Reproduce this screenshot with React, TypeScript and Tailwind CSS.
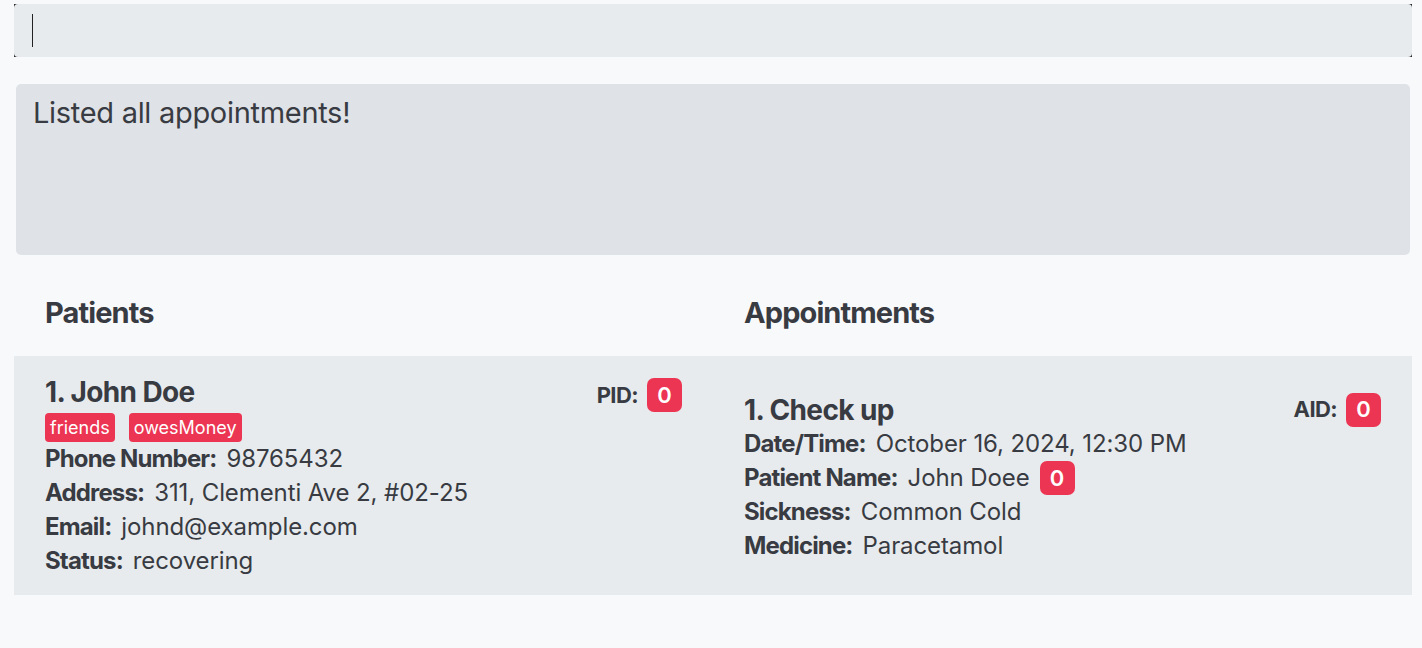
const font = { fontFamily: 'Inter, "Noto Sans", sans-serif' }

function Badge({ children }: { children: React.ReactNode }) {
  return (
    <span className="inline-flex h-[34px] min-w-[35px] items-center justify-center rounded-[7px] bg-[#ec3552] px-2 text-[22px] font-semibold text-white">
      {children}
    </span>
  )
}

function Field({ label, value, extra }: { label: string; value: string; extra?: React.ReactNode }) {
  return (
    <div className="flex h-[34px] items-center gap-[10px] text-[24px] leading-none">
      <span className="font-bold tracking-[-0.85px]">{label}</span>
      <span className="font-normal tracking-[-0.1px]">{value}</span>
      {extra}
    </div>
  )
}

function Tag({ text }: { text: string }) {
  return (
    <span className="inline-flex h-[29px] items-center rounded-[4px] bg-[#ec3552] px-[5px] text-[18px] text-white">
      {text}
    </span>
  )
}

export default function App() {
  return (
    <div className="h-[648px] w-[1422px] bg-[#f8f9fb] text-[#383b42]" style={font}>
      <div className="pt-[4px] pl-[14px] pr-[10px]">
        <div className="h-[53px] bg-[#2a2a2a]">
          <div className="flex h-full items-center rounded-[4px] bg-[#e8ebee] pl-[18px]">
            <div className="h-[33px] w-px bg-[#222]" />
          </div>
        </div>
      </div>

      <div className="ml-[16px] mr-[12px] mt-[27px] h-[171px] rounded-[5px] bg-[#dfe2e7] px-[17px] pt-[7px]">
        <p className="text-[29px] tracking-[-0.3px]">Listed all appointments!</p>
      </div>

      <div className="ml-[14px] mr-[10px] grid grid-cols-2">
        <div className="flex h-[101px] items-center pl-[31px] pt-[14px] text-[29px] font-bold tracking-[-0.9px]">Patients</div>
        <div className="flex h-[101px] items-center pl-[31px] pt-[14px] text-[29px] font-bold tracking-[-0.9px]">Appointments</div>

        <div className="flex h-[239px] items-center bg-[#e8ebee] pl-[31px] pr-[31px] pt-[2px]">
          <div className="w-full">
            <div className="flex items-start justify-between">
              <span className="text-[28px] font-bold leading-[34px] tracking-[-0.6px]">1. John Doe</span>
              <span className="flex items-center gap-[9px] pt-[3px]">
                <span className="text-[22px] font-bold tracking-[-0.6px]">PID:</span>
                <Badge>0</Badge>
              </span>
            </div>
            <div className="mt-[1px] flex gap-[14px]">
              <Tag text="friends" />
              <Tag text="owesMoney" />
            </div>
            <Field label="Phone Number:" value="98765432" />
            <Field label="Address:" value="311, Clementi Ave 2, #02-25" />
            <Field label="Email:" value="johnd@example.com" />
            <Field label="Status:" value="recovering" />
          </div>
        </div>

        <div className="flex h-[239px] items-center bg-[#e8ebee] pl-[31px] pr-[31px] pt-[4px]">
          <div className="w-full">
            <div className="flex items-start justify-between">
              <span className="text-[28px] font-bold leading-[34px] tracking-[-0.6px]">1. Check up</span>
              <span className="flex items-center gap-[9px]">
                <span className="text-[22px] font-bold tracking-[-0.6px]">AID:</span>
                <Badge>0</Badge>
              </span>
            </div>
            <Field label="Date/Time:" value="October 16, 2024, 12:30 PM" />
            <Field label="Patient Name:" value="John Doee" extra={<Badge>0</Badge>} />
            <Field label="Sickness:" value="Common Cold" />
            <Field label="Medicine:" value="Paracetamol" />
          </div>
        </div>
      </div>
    </div>
  )
}
